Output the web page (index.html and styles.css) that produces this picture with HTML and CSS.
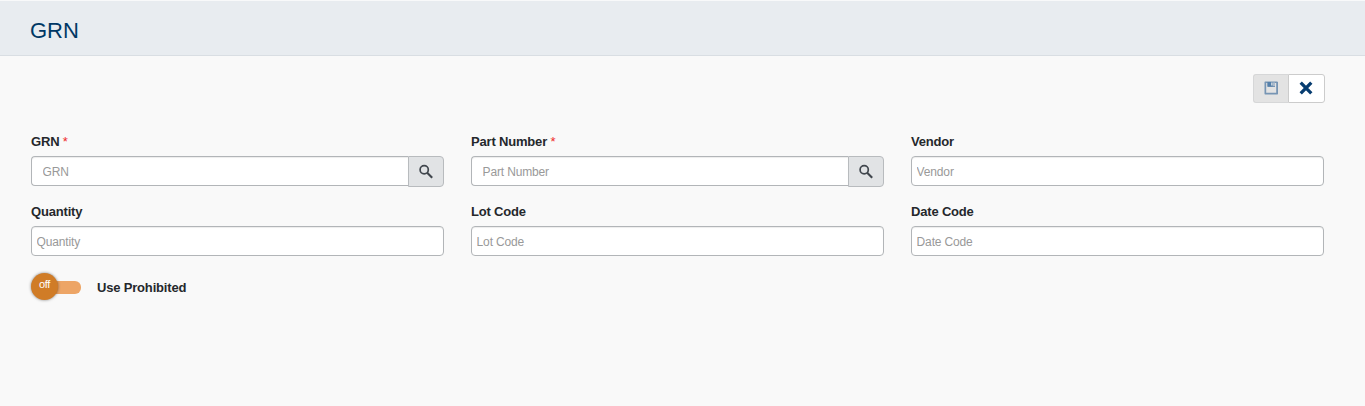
FILE: index.html
```html
<!DOCTYPE html>
<html lang="en">
<head>
<meta charset="utf-8">
<title>GRN</title>
<link rel="stylesheet" href="styles.css">
</head>
<body>
<header class="page-header"><h1 class="title">GRN</h1></header>
<main class="content">
  <div class="toolbar">
    <button class="tool tool-save" disabled aria-label="Save">
      <svg width="14" height="14" viewBox="0 0 14 14"><path fill="#7795b4" fill-rule="evenodd" d="M1 .5h12l1 .5v12l-.5.5H1L.5 13V1zM2.2 2v9.8h10V2H11v4H3.5V2z"/><path fill="#5580ab" d="M3.5 1h5v4.5h-5z"/><path fill="#e3e4e5" d="M7.2 1.5h1.3v3H7.200zM9.500 1.500h1v3.500h-1z"/></svg>
    </button>
    <button class="tool tool-close" aria-label="Close">
      <svg width="14" height="14" viewBox="0 0 14 14"><path d="M1.700 1.700l10.600 10.600M12.300 1.700L1.700 12.300" stroke="#063c70" stroke-width="3.300"/></svg>
    </button>
  </div>
  <form class="form">
    <div class="field">
      <label class="label">GRN <span class="required">*</span></label>
      <div class="group">
        <input class="input input-lookup" placeholder="GRN">
        <button type="button" class="lookup" aria-label="Search"><svg width="16" height="16" viewBox="0 0 16 16" fill="none" stroke="#40464d"><circle cx="6.2" cy="5.8" r="4.1" stroke-width="1.7"/><path d="M9.2 8.8l5 5" stroke-width="2.1"/></svg></button>
      </div>
    </div>
    <div class="field">
      <label class="label">Part Number <span class="required">*</span></label>
      <div class="group">
        <input class="input input-lookup" placeholder="Part Number">
        <button type="button" class="lookup" aria-label="Search"><svg width="16" height="16" viewBox="0 0 16 16" fill="none" stroke="#40464d"><circle cx="6.2" cy="5.8" r="4.1" stroke-width="1.7"/><path d="M9.2 8.8l5 5" stroke-width="2.1"/></svg></button>
      </div>
    </div>
    <div class="field"><label class="label">Vendor</label><div class="group"><input class="input" placeholder="Vendor"></div></div>
    <div class="field"><label class="label">Quantity</label><div class="group"><input class="input" placeholder="Quantity"></div></div>
    <div class="field"><label class="label">Lot Code</label><div class="group"><input class="input" placeholder="Lot Code"></div></div>
    <div class="field"><label class="label">Date Code</label><div class="group"><input class="input" placeholder="Date Code"></div></div>
  </form>
  <div class="switch-row">
    <div class="switch"><span class="knob">off</span><span class="track"></span></div>
    <span class="switch-label">Use Prohibited</span>
  </div>
</main>
</body>
</html>
```

FILE: styles.css
```css
* { box-sizing: border-box; }
body {
  margin: 0;
  min-height: 406px;
  background: #f9f9f9;
  color: #25282c;
  font-family: "Liberation Sans", Arial, sans-serif;
  font-size: 13px;
}
.page-header {
  height: 56px;
  padding: 17px 31px 0 30px;
  background: #e8ecf0;
  border-top: 1px solid #f8f9fa;
  border-bottom: 1px solid #d9dee3;
}
.title {
  margin: 0;
  color: #003865;
  font-size: 22px;
  font-weight: 400;
  line-height: 25px;
}
.content { padding: 18px 41px 0 31px; }
.toolbar { display: flex; justify-content: flex-end; margin-right: -1px; height: 29px; }
.tool {
  display: flex;
  align-items: center;
  justify-content: center;
  height: 29px;
  padding: 0 0 2px;
  background: #fff;
  border: 1px solid #ccc;
}
.tool svg { flex: none; }
.tool-save { background: #e3e3e3; border-color: #d6d7d8; border-right: 0; border-radius: 3px 0 0 3px; width: 35px; }
.tool-close { border-radius: 0 3px 3px 0; width: 37px; padding-right: 1px; }
.form {
  display: grid;
  grid-template-columns: repeat(3, 413px);
  column-gap: 27px;
  margin-top: 31px;
}
.field { height: 70px; }
.label { display: block; height: 22px; line-height: 15px; font-weight: 700; letter-spacing: -.18px; }
.required { color: #ef2b2b; font-weight: 400; }
.group { display: flex; align-items: flex-start; }
.input {
  flex: 1;
  min-width: 0;
  height: 30px;
  padding: 1px 5px 0 4.6px;
  background: #fff;
  border: 1px solid #b2b5b8;
  border-radius: 4px;
  box-shadow: inset 0 1px 1px rgba(0, 0, 0, .075);
  font: 12px "Liberation Sans", Arial, sans-serif;
  letter-spacing: -.15px;
}
.input::placeholder { color: #999; opacity: 1; }
.input-lookup { padding-left: 10.6px; border-right: 0; border-radius: 4px 0 0 4px; }
.lookup {
  width: 36px;
  height: 31px;
  padding: 1px 0 0;
  background: #e1e3e5;
  border: 1px solid #b8bbbe;
  border-radius: 0 4px 4px 0;
  display: flex;
  align-items: center;
  justify-content: center;
}
.switch-row { display: flex; align-items: center; height: 28px; margin-top: -2px; }
.switch { display: flex; align-items: center; width: 50px; }
.knob {
  z-index: 1;
  width: 27px;
  height: 27px;
  padding-top: 5px;
  border-radius: 50%;
  background: #d07c27;
  color: #fff;
  font-size: 11px;
  line-height: 13px;
  letter-spacing: -.3px;
  text-align: center;
  box-shadow: 0 0 3px rgba(0, 0, 0, .5);
}
.track { width: 33px; height: 13px; margin: 2px 0 0 -10px; border-radius: 6px; background: #eda566; }
.switch-label { margin-left: 16px; padding-top: 2px; font-weight: 700; line-height: 15px; letter-spacing: -.18px; }
```
